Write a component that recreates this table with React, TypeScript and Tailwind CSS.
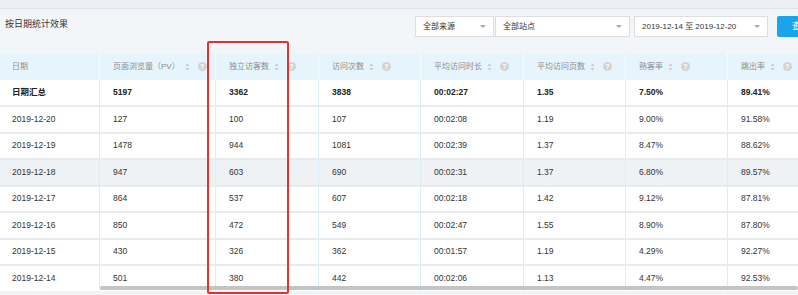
import React from 'react';

const cols = [100, 116, 103, 102, 103, 102, 102, 110];

const headers = ['日期', '页面浏览量（PV）', '独立访客数', '访问次数', '平均访问时长', '平均访问页数', '熟客率', '跳出率'];

const summary = ['日期汇总', '5197', '3362', '3838', '00:02:27', '1.35', '7.50%', '89.41%'];

const rows = [
  ['2019-12-20', '127', '100', '107', '00:02:08', '1.19', '9.00%', '91.58%'],
  ['2019-12-19', '1478', '944', '1081', '00:02:39', '1.37', '8.47%', '88.62%'],
  ['2019-12-18', '947', '603', '690', '00:02:31', '1.37', '6.80%', '89.57%'],
  ['2019-12-17', '864', '537', '607', '00:02:18', '1.42', '9.12%', '87.81%'],
  ['2019-12-16', '850', '472', '549', '00:02:47', '1.55', '8.90%', '87.80%'],
  ['2019-12-15', '430', '326', '362', '00:01:57', '1.19', '4.29%', '92.27%'],
  ['2019-12-14', '501', '380', '442', '00:02:06', '1.13', '4.47%', '92.53%'],
];

function SortIcon() {
  return (
    <svg width="5" height="8" viewBox="0 0 5 8" className="ml-[5px]">
      <path d="M2.5 0.5 L4.5 3 L0.5 3 Z" fill="#c9c9c9" />
      <path d="M2.5 7.5 L4.5 5 L0.5 5 Z" fill="#c9c9c9" />
    </svg>
  );
}

function HelpIcon() {
  return (
    <span className="ml-[8px] flex h-[9px] w-[9px] items-center justify-center rounded-full bg-[#d3d3d3] text-[7px] leading-none font-bold text-white">
      ?
    </span>
  );
}

function Select({ label, width }: { label: string; width: string }) {
  return (
    <div className={`${width} flex h-[21px] shrink-0 items-center justify-between border border-[#dedede] bg-white pl-[7px] pr-[7px]`}>
      <span className="text-[8px] text-[#333]">{label}</span>
      <span className="h-0 w-0 border-x-[3px] border-t-[3px] border-x-transparent border-t-[#aaa]" />
    </div>
  );
}

export default function App() {
  return (
    <div className="relative h-[295px] w-[798px] overflow-hidden bg-[#f3f6f9] font-['Liberation_Sans','Noto_Sans_CJK_SC',sans-serif]">
      <div className="h-[9px] border-b border-[#dfe3e8] bg-[#eceff3]" />

      <div className="flex h-[44px]">
        <div className="w-[415px] shrink-0 pl-[5px] pt-[9px] text-[9px] text-[#333]">按日期统计效果</div>
        <div className="flex shrink-0 pt-[7px]">
          <Select label="全部来源" width="w-[79px]" />
          <div className="ml-[1px] shrink-0">
            <Select label="全部站点" width="w-[135px]" />
          </div>
          <div className="ml-[4px] shrink-0">
            <Select label="2019-12-14 至 2019-12-20" width="w-[134px]" />
          </div>
          <div className="ml-[9px] flex h-[21px] w-[60px] shrink-0 items-center rounded-[2px] bg-[#1ca4ea] pl-[15px] text-[9px] text-white">
            查询
          </div>
        </div>
      </div>

      <div className="bg-white">
        <div className="flex h-[27px] bg-[#e6f5fc]">
          {headers.map((h, i) => (
            <div
              key={h}
              style={{ width: cols[i] }}
              className={`flex shrink-0 items-center border-r border-[#f4fbfe] text-[8px] text-[#8d8d8d] ${i === 0 ? 'pl-[12px]' : 'pl-[13px]'}`}
            >
              <span>{h}</span>
              {i > 0 && <SortIcon />}
              {i > 0 && <HelpIcon />}
            </div>
          ))}
        </div>

        <div className="flex h-[27px] border-b-2 border-[#e9ebed] bg-white">
          {summary.map((v, i) => (
            <div
              key={i}
              style={{ width: cols[i] }}
              className={`flex shrink-0 items-center border-r border-[#d9eef8] text-[8.5px] font-bold text-[#222] ${i === 0 ? 'pl-[12px]' : 'pl-[13px]'}`}
            >
              {v}
            </div>
          ))}
        </div>

        {rows.map((r, ri) => (
          <div
            key={r[0]}
            className={`flex h-[26.5px] border-b-2 border-[#e9ebed] ${ri === 2 ? 'bg-[#eef2f5]' : 'bg-white'}`}
          >
            {r.map((v, i) => (
              <div
                key={i}
                style={{ width: cols[i] }}
                className={`flex shrink-0 items-center border-r border-[#d9eef8] text-[8.5px] text-[#333] ${i === 0 ? 'pl-[12px]' : 'pl-[13px]'}`}
              >
                {v}
              </div>
            ))}
          </div>
        ))}
      </div>

      <div className="absolute bottom-[5px] left-[100px] right-0 h-[4px] rounded-full bg-[#c4c4c4]" />
      <div className="absolute bottom-0 left-0 right-0 h-[4px] bg-[#eef4f8]" />

      <div className="absolute left-[207px] top-[41px] h-[253px] w-[82px] rounded-[2px] border-2 border-[#e5322d]" />
    </div>
  );
}
